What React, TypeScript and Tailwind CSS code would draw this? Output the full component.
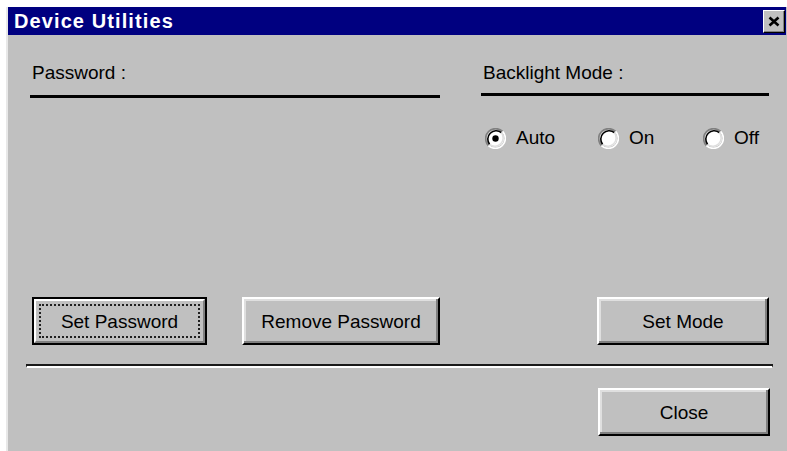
import React from "react";

const sans = "font-['Liberation_Sans',Arial,sans-serif]";

// Classic 3D bevel used by push buttons
const bevel =
  "border-2 border-t-white border-l-white border-r-black border-b-black shadow-[inset_-2px_-2px_#808080,inset_2px_2px_#dfdfdf]";

function PushButton({ label, className = "" }: { label: string; className?: string }) {
  return (
    <button
      type="button"
      className={`${bevel} ${className} h-[48px] bg-[#c0c0c0] text-[19px] leading-none text-black flex items-center justify-center`}
    >
      {label}
    </button>
  );
}

function DefaultButton({ label, className = "" }: { label: string; className?: string }) {
  return (
    <div className={`${className} h-[48px] border-2 border-black`}>
      <div className="h-full border-2 border-t-white border-l-white border-r-[#808080] border-b-[#808080] p-[3px] bg-[#c0c0c0]">
        <div className="h-full border-2 border-dotted border-[#202020] flex items-center justify-center text-[19px] leading-none text-black">
          {label}
        </div>
      </div>
    </div>
  );
}

function Radio({ checked }: { checked?: boolean }) {
  return (
    <svg width="21" height="21" viewBox="0 0 21 21" className="shrink-0">
      <circle cx="10.5" cy="10.5" r="8.5" fill="#ffffff" />
      <path d="M3.43 17.57 A10 10 0 0 1 17.57 3.43" fill="none" stroke="#808080" strokeWidth="1.6" />
      <path d="M17.57 3.43 A10 10 0 0 1 3.43 17.57" fill="none" stroke="#ffffff" strokeWidth="1.6" />
      <path d="M4.6 16.4 A8.4 8.4 0 0 1 16.4 4.6" fill="none" stroke="#000000" strokeWidth="1.6" />
      <path d="M16.4 4.6 A8.4 8.4 0 0 1 4.6 16.4" fill="none" stroke="#dfdfdf" strokeWidth="1.6" />
      {checked && <circle cx="10.5" cy="10.5" r="3.2" fill="#000000" />}
    </svg>
  );
}

function RadioOption({ label, checked, className = "" }: { label: string; checked?: boolean; className?: string }) {
  return (
    <label className={`flex items-center gap-[10px] ${className}`}>
      <Radio checked={checked} />
      <span className="text-[19px] leading-[22px] text-black">{label}</span>
    </label>
  );
}

export default function App() {
  return (
    <div className={`h-[451px] w-[787px] bg-white pt-[7px] pl-[6px] overflow-hidden flex flex-col ${sans}`}>
      <div className="flex-1 w-[781px] border-l-2 border-l-[#e8e8e8] bg-[#c0c0c0]">
        {/* title bar */}
        <div className="mr-[1px] h-[28px] bg-[#000080] flex items-start justify-between pl-[6px] pr-[1px]">
          <span className="text-[20px] leading-[28px] font-bold tracking-[1.1px] text-white">Device Utilities</span>
          <button
            type="button"
            className="mt-[3px] w-[22px] h-[23px] bg-[#c0c0c0] border border-t-white border-l-white border-r-black border-b-black shadow-[inset_-1px_-1px_#808080] flex items-center justify-center"
          >
            <svg width="12" height="11" viewBox="0 0 12 11">
              <path d="M1.5 1.5 L10.5 9.5 M10.5 1.5 L1.5 9.5" stroke="#000" strokeWidth="2.6" />
            </svg>
          </button>
        </div>

        {/* body */}
        <div className="pl-[18px] pt-[27px]">
          <div className="ml-[4px] h-[283px] grid grid-cols-[410px_288px] gap-x-[41px]">
            {/* password column */}
            <div className="flex flex-col">
              <span className="pl-[2px] text-[19px] leading-[22px] text-black">Password :</span>
              <div className="mt-[11px] h-[3px] bg-black" />
              <div className="mt-auto flex">
                <DefaultButton label="Set Password" className="ml-[2px] w-[175px]" />
                <PushButton label="Remove Password" className="ml-[35px] w-[198px]" />
              </div>
            </div>

            {/* backlight column */}
            <div className="flex flex-col">
              <span className="pl-[2px] text-[19px] leading-[22px] text-black">Backlight Mode :</span>
              <div className="mt-[9px] h-[3px] bg-black" />
              <div className="mt-[31px] pl-[4px] flex items-center">
                <RadioOption label="Auto" checked className="w-[113px]" />
                <RadioOption label="On" className="w-[105px]" />
                <RadioOption label="Off" />
              </div>
              <div className="mt-auto flex justify-end">
                <PushButton label="Set Mode" className="w-[172px]" />
              </div>
            </div>
          </div>

          {/* etched separator */}
          <div className="mt-[19px] w-[747px] h-[4px] border-t-2 border-t-[#1a1a1a] border-b-2 border-b-white border-x border-x-[#1a1a1a]" />

          <div className="mt-[20px] w-[747px] flex justify-end pr-[3px]">
            <PushButton label="Close" className="w-[172px]" />
          </div>
        </div>
      </div>
    </div>
  );
}
